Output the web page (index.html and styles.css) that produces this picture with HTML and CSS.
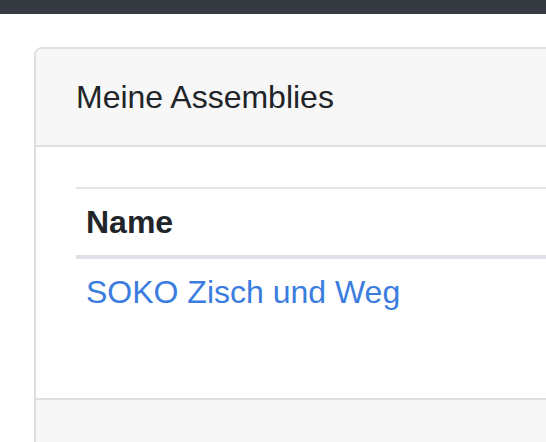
FILE: index.html
```html
<!DOCTYPE html>
<html lang="de">
<head>
<meta charset="utf-8">
<title>Meine Assemblies</title>
<link rel="stylesheet" href="styles.css">
</head>
<body>
<nav class="navbar"></nav>
<main class="container">
  <section class="card">
    <div class="card-header">Meine Assemblies</div>
    <div class="card-body">
      <table class="table">
        <thead>
          <tr><th>Name</th></tr>
        </thead>
        <tbody>
          <tr><td><a href="#" class="link">SOKO Zisch und Weg</a></td></tr>
        </tbody>
      </table>
    </div>
    <div class="card-footer">&nbsp;</div>
  </section>
</main>
</body>
</html>
```

FILE: styles.css
```css
html, body {
  margin: 0;
  padding: 0;
  background: #ffffff;
  overflow: hidden;
}
body {
  font-family: "Liberation Sans", Arial, sans-serif;
  font-size: 32px;
  line-height: 48px;
  color: #212529;
}
.navbar {
  height: 14px;
  background: #343a40;
}
.container {
  padding: 33px 0 0 34px;
}
.card {
  width: 760px;
  border: 2px solid #dfdfdf;
  border-radius: 8px;
  background: #ffffff;
  overflow: hidden;
}
.card-header {
  padding: 24px 40px;
  background: #f7f7f7;
  border-bottom: 2px solid #dfdfdf;
}
.card-body {
  padding: 40px;
}
.table {
  width: 100%;
  border-collapse: collapse;
  margin-bottom: 32px;
}
.table th {
  text-align: left;
  font-weight: bold;
  padding: 9px 10px;
  border-top: 2px solid #e4e5e8;
  border-bottom: 4px solid #dfe0e5;
}
.table td {
  padding: 9px 10px 10px;
}
.link {
  color: #3a7ddf;
  text-decoration: none;
}
.card-footer {
  padding: 24px 40px;
  background: #f7f7f7;
  border-top: 2px solid #dfdfdf;
  height: 48px;
}
```
